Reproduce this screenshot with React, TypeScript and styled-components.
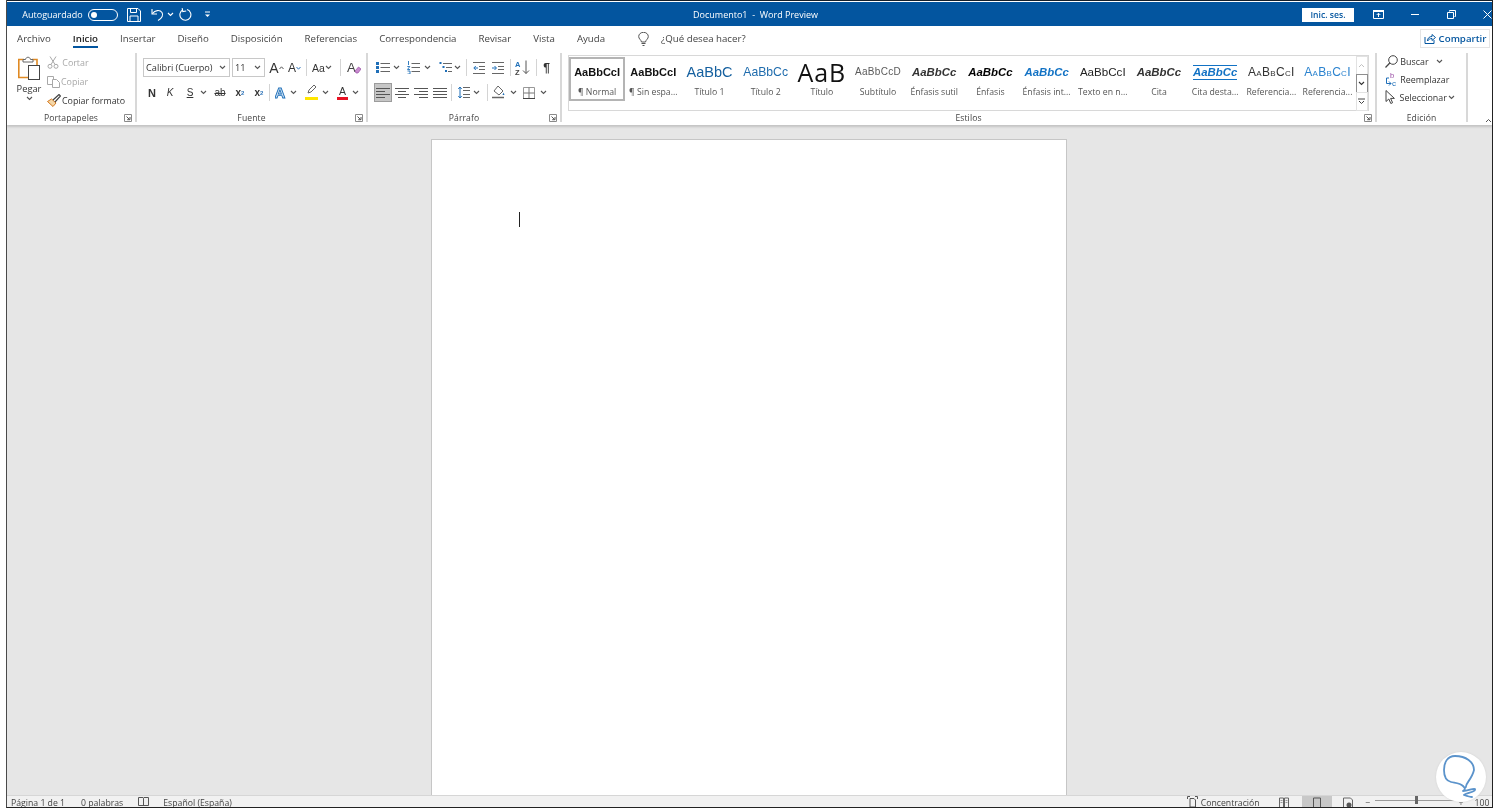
import React from "react";
import styled, { createGlobalStyle } from "styled-components";

const Global = createGlobalStyle`
  html, body { margin: 0; padding: 0; background: #fff; height: 100%; overflow: hidden; }
  #root { height: 808px; }
  * { box-sizing: border-box; }
`;
const ui = `"Open Sans", "Noto Sans", "Liberation Sans", sans-serif`;
const arial = `"Liberation Sans", Arial, sans-serif`;

const Page = styled.div`
  position: relative; width: 1500px; height: 808px; padding: 0 7px 0 6px; background: #fff; font-family: ${ui}; overflow: hidden; filter: blur(0.3px);
`;
const Window = styled.div`
  height: 808px; display: flex; flex-direction: column; overflow: hidden; background: #e6e6e6;
  border-left: 1px solid #4a4a4a; border-right: 1px solid #222; border-bottom: 1px solid #222;
`;
const TitleBar = styled.header`
  height: 26px; flex: none; background: #03559f; color: #fff; display: flex; align-items: center; padding-top: 2px;
  border-top: 1px solid #16202c; box-shadow: inset 0 1px 0 #fff; font-size: 9px;
`;
const Slot = styled.span<{ $w: number; $ml?: number }>`
  flex: none; width: ${p => p.$w}px; margin-left: ${p => p.$ml ?? 0}px; display: inline-flex; align-items: center; justify-content: center; white-space: nowrap;
`;
const TitleText = styled.span`
  flex: none; width: 125px; margin-left: 482px; font-size: 9px; white-space: nowrap; text-align: center;
`;
const SignIn = styled.button`
  flex: none; width: 52px; height: 14px; margin-left: 484px; border: 0; padding: 0; background: #fff; color: #03559f; font: 600 8.6px ${ui};
`;
const TabBar = styled.nav`
  height: 25px; flex: none; background: #fff; display: flex; align-items: center; padding-left: 10px; font-size: 9.7px; color: #444; position: relative;
`;
const Tab = styled.span<{ $active?: boolean }>`
  margin-right: 22px; height: 18px; line-height: 17px; white-space: nowrap; color: ${p => (p.$active ? "#222" : "#444")};
  border-bottom: 2px solid ${p => (p.$active ? "#03559f" : "transparent")};
  font-weight: ${p => (p.$active ? 600 : 400)};
`;
const Tell = styled.span`
  display: inline-flex; align-items: center; gap: 12px; margin-left: 11px; white-space: nowrap;
`;
const Share = styled.button`
  margin-left: auto; margin-right: 2px; width: 70px; height: 19px; display: flex; align-items: center; justify-content: center; gap: 3px; padding: 0;
  background: #fff; border: 1px solid #e4e4e4; color: #03559f; font: 600 9.7px ${ui};
`;
const Ribbon = styled.section`
  height: 74px; flex: none; background: #fff; display: flex; box-shadow: 0 2px 2px #c4c4c4; position: relative; z-index: 1;
`;
const Group = styled.div<{ $w: number }>`
  flex: none; width: ${p => p.$w}px; margin: 2px 0 3px; height: 69px; border-right: 2px solid #d8d8d8; display: flex; flex-direction: column;
`;
const GroupBody = styled.div`
  height: 59px; flex: none; position: relative;
`;
const GroupFoot = styled.div`
  height: 12px; flex: none; display: grid; grid-template-columns: 1fr auto 1fr; align-items: center; font-size: 8.6px; color: #444;
  & > b { font-weight: 400; grid-column: 2; line-height: 12px; letter-spacing: .1px; }
`;
const Launcher = styled.span`
  grid-column: 3; justify-self: end; margin-right: 3px; display: inline-flex;
`;
const Collapse = styled.span`
  margin: auto 0 2px 17px; flex: none; display: inline-flex;
`;
const Clip = styled.div`
  display: flex; height: 59px;
`;
const PasteCol = styled.div`
  flex: none; margin-left: 9px; width: 26px; display: flex; flex-direction: column; align-items: center; font-size: 9.3px; color: #333; padding-top: 3px;
`;
const PasteLabel = styled.span`
  margin-top: 1px; line-height: 14px;
`;
const ClipList = styled.div`
  margin-left: 5px; display: flex; flex-direction: column;
`;
const ClipRow = styled.div<{ $off?: boolean }>`
  height: 19px; display: flex; align-items: center; gap: 1px; font-size: 8.9px; white-space: nowrap; color: ${p => (p.$off ? "#a8a8a8" : "#333")};
`;
const Rows = styled.div`
  display: flex; flex-direction: column; gap: 6px; padding-top: 5px;
`;
const Row = styled.div`
  display: flex; height: 19px; align-items: center; color: #333;
`;
const Select = styled.span<{ $w: number; $ml: number }>`
  flex: none; width: ${p => p.$w}px; margin-left: ${p => p.$ml}px; height: 19px; border: 1px solid #c8c8c8; display: flex; align-items: center; justify-content: space-between;
  padding: 0 3px 0 2px; font-size: 9.2px; color: #333; white-space: nowrap;
`;
const Sep = styled.span<{ $ml: number }>`
  flex: none; width: 1px; height: 17px; background: #d4d4d4; margin-left: ${p => p.$ml}px;
`;
const FontBtn = styled(Slot)<{ $size?: number; $weight?: number; $italic?: boolean; $under?: boolean; $strike?: boolean; $color?: string }>`
  font-family: ${arial}; font-size: ${p => p.$size ?? 11}px; font-weight: ${p => p.$weight ?? 400}; font-style: ${p => (p.$italic ? "italic" : "normal")};
  text-decoration: ${p => (p.$under ? "underline" : p.$strike ? "line-through" : "none")}; color: ${p => p.$color ?? "#333"}; line-height: 14px;
  & sub, & sup { font-size: 6px; line-height: 0; color: #2f74b8; }
`;
const ColorA = styled(Slot)<{ $bar: string }>`
  height: 15px; flex-direction: column; justify-content: flex-start; font: 10.5px/12px ${arial}; color: #333; border-bottom: 3px solid ${p => p.$bar};
`;
const Selected = styled(Slot)`
  height: 19px; background: #c6c6c6; border: 1px solid #9c9c9c;
`;
const Gallery = styled.div`
  margin: 2px 0 0 6px; width: 801px; height: 56px; display: flex; border: 1px solid #d8d8d8; padding: 1px 0 0 0; background: #fff;
`;
const StyleCard = styled.div<{ $sel?: boolean }>`
  flex: none; width: 56.2px; height: 44px; overflow: hidden; display: flex; flex-direction: column; align-items: center; white-space: nowrap;
  ${p => p.$sel ? "border: 2px solid #b4b4b4;" : "border: 2px solid transparent;"}
`;
const Preview = styled.div<{ $css: string }>`
  height: 20px; width: 100%; display: flex; align-items: center; justify-content: center; overflow: hidden; margin-top: 3px; font-family: ${arial}; line-height: 20px;
  ${p => p.$css}
`;
const StyleName = styled.div`
  font-size: 8.7px; color: #555; margin-top: 4px; line-height: 12px;
`;
const Spin = styled.div`
  margin-left: auto; width: 13px; display: flex; flex-direction: column; height: 54px;
`;
const SpinBtn = styled.span<{ $active?: boolean }>`
  flex: 1; display: flex; align-items: center; justify-content: center; border: 1px solid ${p => (p.$active ? "#8e8e8e" : "#e2e2e2")}; background: #fff; margin-top: -1px;
`;
const EditList = styled.div`
  display: flex; flex-direction: column; padding-left: 8px; margin-top: -1px;
`;
const EditRow = styled.div`
  height: 18px; display: flex; align-items: center; font-size: 8.9px; color: #333; white-space: nowrap;
`;
const Canvas = styled.main`
  flex: 1; min-height: 0; padding: 14px 2px 0 0; display: flex; justify-content: center; overflow: hidden; background: #e6e6e6;
`;
const Sheet = styled.div`
  width: 636px; height: 800px; flex: none; background: #fff; border: 1px solid #c6c6c6; padding: 72px 0 0 87px;
`;
const Caret = styled.div`
  width: 1px; height: 15px; background: #222;
`;
const Status = styled.footer`
  height: 12px; flex: none; background: #f1f1f1; border-top: 1px solid #d6d6d6; display: flex; align-items: flex-start; font-size: 8.7px; color: #444; overflow: hidden; white-space: nowrap; line-height: 12px;
`;
const StatusText = styled.span<{ $ml: number }>`
  flex: none; margin-left: ${p => p.$ml}px; padding-top: 1px;
`;
const StatusView = styled(Slot)<{ $sel?: boolean }>`
  height: 12px; background: ${p => (p.$sel ? "#c8c8c8" : "transparent")};
`;
const Track = styled.span`
  flex: none; width: 83px; margin-left: 4px; height: 8px; display: flex; align-items: center; justify-content: center; background: linear-gradient(#9a9a9a, #9a9a9a) center / 100% 1px no-repeat;
`;
const Thumb = styled.span`
  width: 3px; height: 8px; background: #666;
`;
const Badge = styled.div`
  position: absolute; left: 1436px; top: 752px; width: 50px; height: 50px; border-radius: 50%; background: #fff; box-shadow: 0 0 2px #cfcfcf;
`;

const Svg = ({ w, h, children }: { w: number; h: number; children: React.ReactNode }) => (
  <svg width={w} height={h} viewBox={`0 0 ${w} ${h}`} fill="none" style={{ display: "block", flex: "none" }}>{children}</svg>
);
const Chev = ({ c = "#555" }: { c?: string }) => (
  <Svg w={7} h={5}><path d="M1 1l2.500 2.500L6 1" stroke={c} strokeWidth="1.100" /></Svg>
);
const Launch = () => (
  <Svg w={8} h={8}><path d="M.5 7.500V.5h7v7z" stroke="#8a8a8a" /><path d="M2.500 2.500l3 3M6 3v2.700H3.200" stroke="#555" /></Svg>
);
const SaveIc = () => (
  <Svg w={14} h={14}><path d="M.5.500h10.500l2.500 2.500v10.500H.5z" stroke="#fff" /><path d="M3.500.5v4h6v-4M3 13.500V8h8v5.500" stroke="#fff" /></Svg>
);
const UndoIc = () => (
  <Svg w={13} h={13}><path d="M1 1v5h5" stroke="#fff" strokeWidth="1.100" /><path d="M1.400 5.600C4 2 9 1.600 11 4.500c1.500 2.500.3 5.500-4 8" stroke="#fff" strokeWidth="1.100" /></Svg>
);
const RedoIc = () => (
  <Svg w={13} h={14}><path d="M8 1.500A5.500 5.500 0 1 1 4 1.800" stroke="#fff" strokeWidth="1.100" /><path d="M3.500 0v3.500H7" stroke="#fff" strokeWidth="1.100" transform="rotate(-10 4 2)" /></Svg>
);
const Toggle = () => (
  <Svg w={30} h={12}><rect x=".5" y=".5" width="29" height="11" rx="5.500" stroke="#fff" /><circle cx="6" cy="6" r="3" fill="#fff" /></Svg>
);
const Bulb = () => (
  <Svg w={11} h={14}><path d="M3.500 10C3 7.500.7 7 .7 4.500a4.800 4.200 0 0 1 9.600 0C10.300 7 8 7.500 7.500 10z" stroke="#555" /><path d="M3.500 11.500h4M4.500 13.500h2" stroke="#555" /></Svg>
);
const ShareIc = () => (
  <Svg w={12} h={11}><path d="M1 4v6.500h9V7" stroke="#03559f" /><path d="M3.500 8c0-3 2-4.500 4.500-4.500V1.500l3.500 3-3.500 3V5.500c-2 0-3.500 1-4.500 2.500z" stroke="#03559f" /></Svg>
);
const PasteIc = () => (
  <Svg w={22} h={25}>
    <path d="M6 3.500H.8v18H10" stroke="#e08a24" strokeWidth="1.600" />
    <path d="M14 3.500h5v6" stroke="#e08a24" strokeWidth="1.600" />
    <path d="M5 6V3.500h2.500C8 .5 12 .5 12.500 3.500H15V6z" fill="#fff" stroke="#666" />
    <rect x="10.500" y="9.500" width="11" height="14" fill="#fff" stroke="#444" />
  </Svg>
);
const CutIc = () => (
  <Svg w={12} h={13}><path d="M3 .5l5 8M9 .5l-5 8" stroke="#a8a8a8" /><circle cx="3" cy="10.300" r="2" stroke="#a8a8a8" /><circle cx="9" cy="10.300" r="2" stroke="#a8a8a8" /></Svg>
);
const CopyIc = () => (
  <Svg w={13} h={12}><path d="M.5.500h6v8h-6z" stroke="#a8a8a8" /><path d="M5.500 3.500h4l3 3v5h-7z" fill="#fff" stroke="#a8a8a8" /></Svg>
);
const PainterIc = () => (
  <Svg w={14} h={13}><path d="M.5 7.500L6 12.500l3-3.500-4.500-4z" fill="#f4d7a8" stroke="#d4781e" /><path d="M6 6l6-5.500 1.500 1.500L8 8" stroke="#444" strokeWidth="1.200" /></Svg>
);
const Caret2 = ({ up }: { up?: boolean }) => (
  <Svg w={5} h={4}><path d={up ? "M.5 3L2.500.8 4.500 3" : "M.5 1l2 2.200 2-2.200"} stroke={up ? "#555" : "#2f74b8"} /></Svg>
);
const Clear = () => (
  <Svg w={14} h={14}><text x="0" y="11" fontFamily="Liberation Sans" fontSize="13" fill="#444">A</text><path d="M8 10l3.500-4 2.500 2-3 4H9z" fill="#c98bd0" stroke="#9a4fa5" strokeWidth=".7" /></Svg>
);
const lines = (w: number, x = 0, ys = [2.500, 6.500, 10.500]) => ys.map(y => `M${x} ${y}h${w}`).join("");
const BulletsIc = () => (
  <Svg w={14} h={13}><path d={lines(9.500, 4.500)} stroke="#666" /><path d="M0 1h3v3H0zM0 5h3v3H0zM0 9h3v3H0z" fill="#1f6fb8" /></Svg>
);
const NumIc = () => (
  <Svg w={13} h={13}><path d={lines(8.500, 4.500)} stroke="#666" /><path d="M1.500 0v4M.3 5.500h2.500L.5 8.500h2.500M.5 10h2.500v3H.5" stroke="#1f6fb8" strokeWidth=".9" /></Svg>
);
const MultiIc = () => (
  <Svg w={14} h={13}><path d="M5 2.500h9M8 6.500h6M10 10.500h4" stroke="#666" /><path d="M1.500 1h2v2h-2zM4.500 5h2v2h-2zM7 9h2v2H7z" fill="#1f6fb8" /></Svg>
);
const IndentIc = ({ inc }: { inc?: boolean }) => (
  <Svg w={12} h={12}><path d="M0 .5h12M6 4.500h6M6 7.500h6M0 11.500h12" stroke="#666" /><path d={inc ? "M0 6h4M2.500 4l2 2-2 2" : "M5 6H1M2.800 4l-2 2 2 2"} stroke="#1f6fb8" /></Svg>
);
const SortIc = () => (
  <Svg w={15} h={15}><text x="0" y="7" fontFamily="Liberation Sans" fontSize="7.500" fontWeight="700" fill="#1f6fb8">A</text><text x="0" y="14.500" fontFamily="Liberation Sans" fontSize="7.500" fontWeight="700" fill="#444">Z</text><path d="M11 .5v13M8 10.500l3 3 3-3" stroke="#555" /></Svg>
);
const Align = ({ kind }: { kind: "l" | "c" | "r" | "j" }) => {
  const rows: [number, number][] = kind === "j" ? [[0, 14], [0, 14], [0, 14], [0, 14]]
    : kind === "l" ? [[0, 14], [0, 9], [0, 14], [0, 9]]
    : kind === "c" ? [[0, 14], [3, 8], [0, 14], [3, 8]]
    : [[0, 14], [5, 9], [0, 14], [5, 9]];
  return <Svg w={14} h={12}><path d={rows.map(([x, w], i) => `M${x} ${1.500 + i * 3}h${w}`).join("")} stroke="#555" strokeWidth="1.200" /></Svg>;
};
const SpacingIc = () => (
  <Svg w={12} h={13}><path d="M5 1.500h7M5 4.500h7M5 8.500h7M5 11.500h7" stroke="#666" /><path d="M2 1v11M.3 3L2 1l1.700 2M.3 10L2 12l1.700-2" stroke="#1f6fb8" /></Svg>
);
const ShadeIc = () => (
  <Svg w={13} h={15}><path d="M2 6l4-5 5 5-4 4z" fill="#fff" stroke="#666" /><path d="M11.500 7.500l1 2.500h-2z" fill="#1f6fb8" /><path d="M0 12.500h12" stroke="#666" strokeWidth="1.500" /></Svg>
);
const BorderIc = () => (
  <Svg w={12} h={12}><path d="M.5.500h11v11H.5z" stroke="#999" /><path d="M6 .5v11M.5 6h11" stroke="#777" /><path d="M0 11.500h12" stroke="#444" /></Svg>
);
const FxA = () => (
  <Svg w={12} h={13}><text x="-.5" y="12" fontFamily="Liberation Sans" fontWeight="700" fontSize="15" fill="#cfe3f5" stroke="#1f6fb8" strokeWidth=".9">A</text></Svg>
);
const Marker = () => (
  <Svg w={13} h={9}><path d="M3 8l1-3 5-5 2 2-5 5z" fill="#fff" stroke="#666" /></Svg>
);
const SearchIc = () => (
  <Svg w={13} h={13}><circle cx="8" cy="5" r="4.300" stroke="#444" /><path d="M4.800 8L.5 12.500" stroke="#444" strokeWidth="1.200" /></Svg>
);
const ReplaceIc = () => (
  <Svg w={13} h={14}>
    <text x="5" y="6" fontFamily="Liberation Sans" fontSize="7.500" fill="#9a4fa5">b</text>
    <text x="7" y="13.500" fontFamily="Liberation Sans" fontSize="8" fill="#1f6fb8">c</text>
    <path d="M4 6H1.500v5.500H6M4 9.500l2 2-2 2" stroke="#1f6fb8" />
  </Svg>
);
const PointerIc = () => (
  <Svg w={10} h={14}><path d="M1 .5v11l2.800-2.500 2 4.500 1.800-.8-2-4.300h3.800z" fill="#fff" stroke="#444" /></Svg>
);
const RibbonOpt = () => (
  <Svg w={11} h={9}><path d="M.5.500h10v8H.5z" stroke="#fff" fill="#03559f" /><path d="M0 0h11v2H0z" fill="#fff" /><path d="M5.500 7V3.500M3.700 5l1.800-1.800L7.300 5" stroke="#fff" /></Svg>
);
const MinIc = () => <Svg w={8} h={3}><path d="M0 1.500h8" stroke="#fff" /></Svg>;
const RestoreIc = () => (
  <Svg w={9} h={9}><path d="M2.500 1.500V.5h6v6h-1" stroke="#fff" /><path d="M.5 2.500h6v6h-6z" stroke="#fff" /></Svg>
);
const CloseIc = () => <Svg w={9} h={9}><path d="M.5.500l8 8M8.500.500l-8 8" stroke="#fff" /></Svg>;
const BookIc = () => (
  <Svg w={11} h={11}><path d="M.5 1.500h4.500l.5 1 .5-1h4.500v8h-10zM5.500 2.500v7" stroke="#555" /></Svg>
);
const FocusIc = () => (
  <Svg w={11} h={11}><path d="M.5 3V.5H3M8 .5h2.500V3" stroke="#555" /><path d="M3 2.500h4l1.500 1.500v7H3z" stroke="#555" /></Svg>
);
const ReadIc = () => (
  <Svg w={10} h={11}><path d="M.5 1h4v10h-4zM5.500 1h4v10h-4z" stroke="#666" /><path d="M1.500 3.500h2M1.500 5.500h2M6.500 3.500h2M6.500 5.500h2" stroke="#999" /></Svg>
);
const PrintIc = () => (
  <Svg w={10} h={11}><path d="M1.500 1h7v10h-7z" stroke="#555" /></Svg>
);
const WebIc = () => (
  <Svg w={10} h={11}><path d="M.5 1h7l2 2v8h-9z" stroke="#666" /><circle cx="6" cy="8" r="2.500" fill="#555" /></Svg>
);
const CustomizeIc = () => <Svg w={7} h={7}><path d="M1 1h5" stroke="#fff" /><path d="M1 3.500l2.500 2.500L6 3.500z" fill="#fff" /></Svg>;

const styles: { name: string; text: string; css: string; sel?: boolean }[] = [
  { name: "¶ Normal", text: "AaBbCcI", css: "font-weight:700;font-size:11px;color:#111;", sel: true },
  { name: "¶ Sin espa...", text: "AaBbCcI", css: "font-weight:700;font-size:11px;color:#111;" },
  { name: "Título 1", text: "AaBbC", css: "font-size:14.5px;color:#15609f;" },
  { name: "Título 2", text: "AaBbCc", css: "font-size:12.2px;color:#1f6cad;" },
  { name: "Título", text: "AaB", css: "font-family:'Open Sans',sans-serif;font-weight:400;font-size:25px;color:#111;letter-spacing:1px;" },
  { name: "Subtítulo", text: "AaBbCcD", css: "font-size:10px;letter-spacing:.3px;color:#5a5a5a;" },
  { name: "Énfasis sutil", text: "AaBbCc", css: "font-size:11.4px;font-style:italic;font-weight:700;color:#333;" },
  { name: "Énfasis", text: "AaBbCc", css: "font-size:11.4px;font-style:italic;font-weight:700;color:#000;" },
  { name: "Énfasis int...", text: "AaBbCc", css: "font-size:11.4px;font-style:italic;font-weight:700;color:#1272c4;" },
  { name: "Texto en n...", text: "AaBbCcI", css: "font-size:11.6px;color:#222;" },
  { name: "Cita", text: "AaBbCc", css: "font-size:11.4px;font-style:italic;font-weight:700;color:#333;" },
  { name: "Cita desta...", text: "AaBbCc", css: "font-size:11.4px;font-style:italic;color:#1272c4;font-weight:700;& > span{border-top:1px solid #1272c4;border-bottom:1px solid #1272c4;line-height:13px;}" },
  { name: "Referencia...", text: "AaBbCcI", css: "font-size:12px;font-variant:small-caps;color:#333;letter-spacing:.3px;" },
  { name: "Referencia...", text: "AaBbCcI", css: "font-size:12px;font-variant:small-caps;color:#2b83cf;letter-spacing:.3px;" },
];

const tabs = ["Archivo", "Inicio", "Insertar", "Diseño", "Disposición", "Referencias", "Correspondencia", "Revisar", "Vista", "Ayuda"];

const Foot = ({ label, launcher = true }: { label: string; launcher?: boolean }) => (
  <GroupFoot><b>{label}</b>{launcher && <Launcher><Launch /></Launcher>}</GroupFoot>
);

export default function App() {
  return (
    <Page>
      <Global />
      <Window>
        <TitleBar>
          <Slot $w={61} $ml={15}>Autoguardado</Slot>
          <Slot $w={30} $ml={5}><Toggle /></Slot>
          <Slot $w={14} $ml={9}><SaveIc /></Slot>
          <Slot $w={13} $ml={10}><UndoIc /></Slot>
          <Slot $w={7} $ml={3}><Chev c="#fff" /></Slot>
          <Slot $w={13} $ml={5}><RedoIc /></Slot>
          <Slot $w={7} $ml={12}><CustomizeIc /></Slot>
          <TitleText>Documento1 &nbsp;-&nbsp; Word Preview</TitleText>
          <SignIn>Inic. ses.</SignIn>
          <Slot $w={11} $ml={19}><RibbonOpt /></Slot>
          <Slot $w={8} $ml={27}><MinIc /></Slot>
          <Slot $w={9} $ml={28}><RestoreIc /></Slot>
          <Slot $w={9} $ml={27}><CloseIc /></Slot>
        </TitleBar>
        <TabBar>
          {tabs.map(t => <Tab key={t} $active={t === "Inicio"}>{t}</Tab>)}
          <Tell><Slot $w={11} $ml={0}><Bulb /></Slot>¿Qué desea hacer?</Tell>
          <Share><ShareIc />Compartir</Share>
        </TabBar>
        <Ribbon>
          <Group $w={130}>
            <GroupBody>
              <Clip>
                <PasteCol>
                  <PasteIc />
                  <PasteLabel>Pegar</PasteLabel>
                  <Chev />
                </PasteCol>
                <ClipList>
                  <ClipRow $off><Slot $w={12}><CutIc /></Slot>&nbsp;Cortar</ClipRow>
                  <ClipRow $off><Slot $w={13}><CopyIc /></Slot>Copiar</ClipRow>
                  <ClipRow><Slot $w={14}><PainterIc /></Slot>Copiar formato</ClipRow>
                </ClipList>
              </Clip>
            </GroupBody>
            <Foot label="Portapapeles" />
          </Group>
          <Group $w={231}>
            <GroupBody>
              <Rows>
                <Row>
                  <Select $w={87} $ml={6}>Calibri (Cuerpo)<Chev /></Select>
                  <Select $w={33} $ml={2}>11<Chev /></Select>
                  <FontBtn $w={15} $ml={4} $size={14}>A<Caret2 up /></FontBtn>
                  <FontBtn $w={13} $ml={4} $size={12}>A<Caret2 /></FontBtn>
                  <Sep $ml={5} />
                  <FontBtn $w={20} $ml={5} $size={10.5}>Aa<Chev /></FontBtn>
                  <Sep $ml={8} />
                  <Slot $w={14} $ml={6}><Clear /></Slot>
                </Row>
                <Row>
                  <FontBtn $w={8} $ml={11} $weight={700} $size={11}>N</FontBtn>
                  <FontBtn $w={6} $ml={11} $italic $size={10}>K</FontBtn>
                  <FontBtn $w={6} $ml={14} $under $size={10}>S</FontBtn>
                  <Slot $w={7} $ml={7}><Chev /></Slot>
                  <FontBtn $w={14} $ml={6} $strike $size={10}>ab</FontBtn>
                  <FontBtn $w={10} $ml={8} $weight={700} $size={10}>x<sub>2</sub></FontBtn>
                  <FontBtn $w={10} $ml={9} $weight={700} $size={10}>x<sup>2</sup></FontBtn>
                  <Sep $ml={5} />
                  <Slot $w={12} $ml={5}><FxA /></Slot>
                  <Slot $w={7} $ml={3}><Chev /></Slot>
                  <ColorA $w={13} $ml={8} $bar="#ffe600"><Marker /></ColorA>
                  <Slot $w={7} $ml={4}><Chev /></Slot>
                  <ColorA $w={11} $ml={8} $bar="#e81123">A</ColorA>
                  <Slot $w={7} $ml={4}><Chev /></Slot>
                </Row>
              </Rows>
            </GroupBody>
            <Foot label="Fuente" />
          </Group>
          <Group $w={194}>
            <GroupBody>
              <Rows>
                <Row>
                  <Slot $w={14} $ml={8}><BulletsIc /></Slot>
                  <Slot $w={7} $ml={3}><Chev /></Slot>
                  <Slot $w={13} $ml={7}><NumIc /></Slot>
                  <Slot $w={7} $ml={4}><Chev /></Slot>
                  <Slot $w={14} $ml={7}><MultiIc /></Slot>
                  <Slot $w={7} $ml={2}><Chev /></Slot>
                  <Sep $ml={5} />
                  <Slot $w={12} $ml={6}><IndentIc /></Slot>
                  <Slot $w={12} $ml={7}><IndentIc inc /></Slot>
                  <Sep $ml={6} />
                  <Slot $w={15} $ml={4}><SortIc /></Slot>
                  <Sep $ml={6} />
                  <FontBtn $w={9} $ml={5} $weight={700} $size={12}>¶</FontBtn>
                </Row>
                <Row>
                  <Selected $w={18} $ml={6}><Align kind="l" /></Selected>
                  <Slot $w={14} $ml={3}><Align kind="c" /></Slot>
                  <Slot $w={14} $ml={5}><Align kind="r" /></Slot>
                  <Slot $w={14} $ml={5}><Align kind="j" /></Slot>
                  <Sep $ml={4} />
                  <Slot $w={12} $ml={6}><SpacingIc /></Slot>
                  <Slot $w={7} $ml={3}><Chev /></Slot>
                  <Sep $ml={7} />
                  <Slot $w={13} $ml={4}><ShadeIc /></Slot>
                  <Slot $w={7} $ml={5}><Chev /></Slot>
                  <Slot $w={12} $ml={6}><BorderIc /></Slot>
                  <Slot $w={7} $ml={5}><Chev /></Slot>
                </Row>
              </Rows>
            </GroupBody>
            <Foot label="Párrafo" />
          </Group>
          <Group $w={815}>
            <GroupBody>
              <Gallery>
                {styles.map((s, i) => (
                  <StyleCard key={i} $sel={s.sel}>
                    <Preview $css={s.css}><span>{s.text}</span></Preview>
                    <StyleName>{s.name}</StyleName>
                  </StyleCard>
                ))}
                <Spin>
                  <SpinBtn><Svg w={7} h={5}><path d="M1 4l2.500-2.500L6 4" stroke="#c0c0c0" /></Svg></SpinBtn>
                  <SpinBtn $active><Chev c="#333" /></SpinBtn>
                  <SpinBtn><Svg w={7} h={7}><path d="M0 1h7" stroke="#444" /><path d="M1 3l2.500 2.500L6 3" stroke="#444" /></Svg></SpinBtn>
                </Spin>
              </Gallery>
            </GroupBody>
            <Foot label="Estilos" />
          </Group>
          <Group $w={91}>
            <GroupBody>
              <EditList>
                <EditRow><SearchIc />&nbsp;Buscar<Slot $w={7} $ml={7}><Chev /></Slot></EditRow>
                <EditRow><ReplaceIc />&nbsp;Reemplazar</EditRow>
                <EditRow><PointerIc />&nbsp;&nbsp;Seleccionar<Slot $w={7} $ml={1}><Chev /></Slot></EditRow>
              </EditList>
            </GroupBody>
            <Foot label="Edición" launcher={false} />
          </Group>
          <Collapse><Svg w={7} h={5}><path d="M1 4l2.500-2.500L6 4" stroke="#555" /></Svg></Collapse>
        </Ribbon>
        <Canvas>
          <Sheet><Caret /></Sheet>
        </Canvas>
        <Status>
          <StatusText $ml={4}>Página 1 de 1</StatusText>
          <StatusText $ml={16}>0 palabras</StatusText>
          <Slot $w={11} $ml={15}><BookIc /></Slot>
          <StatusText $ml={14}>Español (España)</StatusText>
          <Slot $w={11} $ml={955}><FocusIc /></Slot>
          <StatusText $ml={3}>Concentración</StatusText>
          <StatusView $w={10} $ml={19}><ReadIc /></StatusView>
          <StatusView $w={30} $ml={13} $sel><PrintIc /></StatusView>
          <StatusView $w={10} $ml={11}><WebIc /></StatusView>
          <StatusText $ml={13}>−</StatusText>
          <Track><Thumb /></Track>
          <StatusText $ml={1}>+</StatusText>
          <StatusText $ml={11}>100 %</StatusText>
        </Status>
      </Window>
      <Badge>
        <svg width="50" height="50" viewBox="3 3 50 50" fill="none">
          <path d="M33 38c-1-3 6-8 8-17 0-8-8-14-19-14C14 7 11 14 11 21c0 7 3 11 7 12 4 1 9 1 12 4 2 2 3 3 0 5 5 0 10-3 12-2 1 3-9 4-11 6 3 1 6 2 8 2" stroke="#5b93cb" strokeWidth="1.800" strokeLinecap="round" strokeLinejoin="round" />
        </svg>
      </Badge>
    </Page>
  );
}
